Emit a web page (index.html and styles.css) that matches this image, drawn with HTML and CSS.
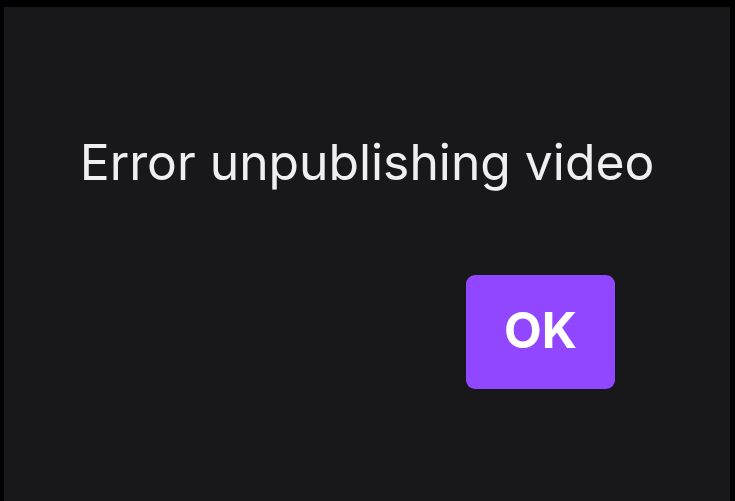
FILE: index.html
```html
<!DOCTYPE html>
<html>
<head>
<meta charset="utf-8">
<link rel="stylesheet" href="styles.css">
</head>
<body>
<div class="dialog">
  <p class="message">Error unpublishing video</p>
  <div class="actions">
    <button class="ok">OK</button>
  </div>
</div>
</body>
</html>
```
FILE: styles.css
```css
html, body {
  margin: 0;
  padding: 0;
  height: 100%;
  background: #000;
}
body {
  padding: 7px 5px 0 4px;
  box-sizing: border-box;
  font-family: Inter, "Noto Sans", sans-serif;
}
.dialog {
  background: #18181b;
  height: 100%;
  display: flex;
  flex-direction: column;
}
.message {
  margin: 0;
  padding-top: 126px;
  text-align: center;
  color: #efeff1;
  font-size: 49.8px;
  line-height: 58px;
}
.actions {
  display: flex;
  justify-content: flex-end;
  padding-right: 115px;
  padding-top: 84px;
}
.ok {
  width: 149px;
  height: 114px;
  border: none;
  border-radius: 9px;
  background: #9147ff;
  color: #fff;
  font-family: Inter, sans-serif;
  font-weight: 700;
  font-size: 49px;
  padding: 0 0 3px 0;
}
```
